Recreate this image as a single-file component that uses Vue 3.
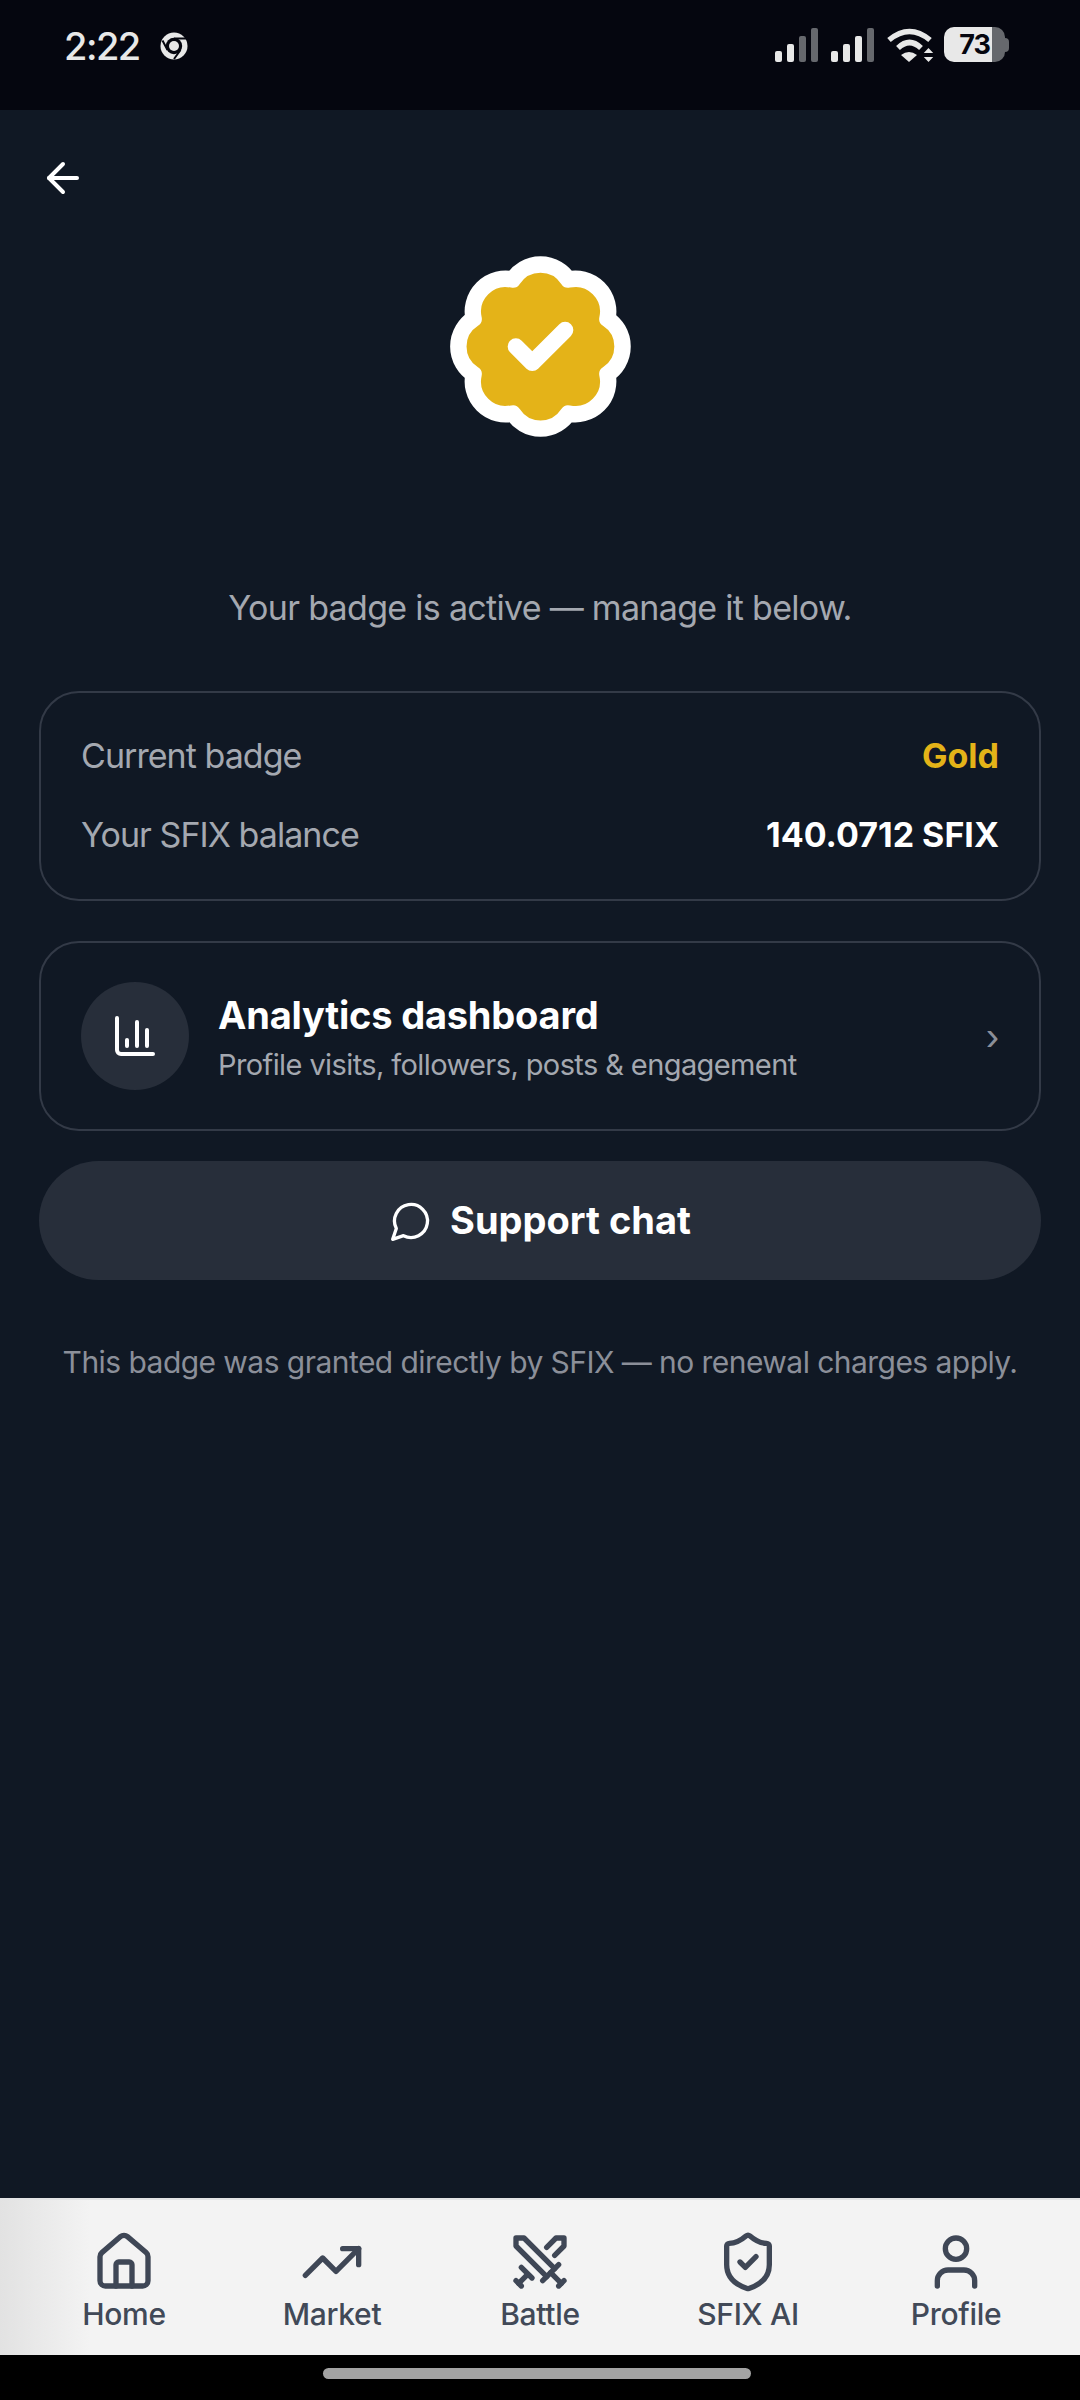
<template>
  <div class="page">
    <!-- status bar -->
    <div class="status">
      <div class="status-left">
        <span class="time">2:22</span>
        <svg class="chrome" width="28" height="28" viewBox="0 0 28 28">
          <circle cx="14" cy="14" r="13.500" fill="#e8e8e8" />
          <circle cx="14" cy="14" r="8.200" fill="#05060f" />
          <circle cx="14" cy="14" r="5" fill="#e8e8e8" />
          <path d="M14 6.500H26M7.500 18 2.500 8.500M20.500 18 14 27" stroke="#05060f" stroke-width="2" fill="none" />
        </svg>
      </div>
      <div class="status-right">
        <svg width="158" height="36" viewBox="0 0 158 36" class="signal">
          <g fill="#e8e8e8">
            <rect x="0" y="23" width="7" height="11" rx="2" />
            <rect x="12" y="16" width="7" height="18" rx="2" />
            <rect x="56" y="23" width="7" height="11" rx="2" />
            <rect x="68" y="16" width="7" height="18" rx="2" />
            <rect x="80" y="8" width="7" height="26" rx="2" />
          </g>
          <g fill="#66686d">
            <rect x="24" y="8" width="7" height="26" rx="2" />
            <rect x="36" y="0" width="7" height="34" rx="2" />
            <rect x="92" y="0" width="7" height="34" rx="2" />
          </g>
          <g fill="none" stroke="#e8e8e8" stroke-width="5.500">
            <path d="M114 12Q134.500-5 155 12" />
            <path d="M123 20Q134.500 9 146 20" />
          </g>
          <path d="M126 27Q134 21 142 27L134 34z" fill="#e8e8e8" />
          <path d="M153.500 20l4.700 5h-9.400zM153.500 34l4.700-5h-9.400z" fill="#e8e8e8" />
        </svg>
        <div class="battery">
          <div class="battery-fill"><span>73</span></div>
          <div class="battery-nub"></div>
        </div>
      </div>
    </div>

    <main class="main">
      <div class="back">
        <svg class="icon" width="48" height="48" viewBox="0 0 24 24">
          <path d="m12 19-7-7 7-7" />
          <path d="M19 12H5" />
        </svg>
      </div>

      <div class="hero">
        <svg width="197" height="197" viewBox="0 0 24 24" class="badge">
          <path d="M3.850 8.620a4 4 0 0 1 4.780-4.770 4 4 0 0 1 6.740 0 4 4 0 0 1 4.780 4.780 4 4 0 0 1 0 6.740 4 4 0 0 1-4.770 4.780 4 4 0 0 1-6.750 0 4 4 0 0 1-4.780-4.770 4 4 0 0 1 0-6.760Z" fill="#e4b318" stroke="#fff" stroke-width="2" stroke-linejoin="round" />
          <path d="m9 12 2 2 4-4" fill="none" stroke="#fff" stroke-width="2" stroke-linecap="round" stroke-linejoin="round" />
        </svg>
      </div>

      <p class="lead">Your badge is active — manage it below.</p>

      <section class="card info">
        <div class="row">
          <span class="label">Current badge</span>
          <span class="gold">Gold</span>
        </div>
        <div class="row">
          <span class="label">Your SFIX balance</span>
          <span class="balance">140.0712 SFIX</span>
        </div>
      </section>

      <section class="card analytics">
        <div class="circle">
          <svg class="icon" width="48" height="48" viewBox="0 0 24 24">
            <path d="M3 3v16a2 2 0 0 0 2 2h16" />
            <path d="M18 17V9" />
            <path d="M13 17V5" />
            <path d="M8 17v-3" />
          </svg>
        </div>
        <div class="analytics-text">
          <div class="title">Analytics dashboard</div>
          <div class="sub">Profile visits, followers, posts &amp; engagement</div>
        </div>
        <span class="chev">›</span>
      </section>

      <button class="support">
        <svg class="icon thin" width="44" height="44" viewBox="0 0 24 24">
          <path d="M7.900 20A9 9 0 1 0 4 16.100L2 22Z" />
        </svg>
        <span class="support-text">Support chat</span>
      </button>

      <p class="note">This badge was granted directly by SFIX — no renewal charges apply.</p>
    </main>

    <!-- bottom tabs -->
    <nav class="tabs">
      <div v-for="t in tabs" :key="t.label" class="tab">
        <svg class="tab-icon" width="64" height="64" viewBox="0 0 24 24">
          <path v-for="d in t.paths" :key="d" :d="d" />
          <circle v-if="t.circle" cx="12" cy="7" r="4" />
        </svg>
        <span class="tab-label">{{ t.label }}</span>
      </div>
    </nav>

    <div class="gesture"><div class="pill"></div></div>
  </div>
</template>

<script setup>
const tabs = [
  {
    label: 'Home',
    paths: [
      'M15 21v-8a1 1 0 0 0-1-1h-4a1 1 0 0 0-1 1v8',
      'M3 10a2 2 0 0 1 .709-1.528l7-5.999a2 2 0 0 1 2.582 0l7 5.999A2 2 0 0 1 21 10v9a2 2 0 0 1-2 2H5a2 2 0 0 1-2-2z'
    ]
  },
  {
    label: 'Market',
    paths: ['M16 7h6v6', 'm22 7-8.500 8.500-5-5L2 17']
  },
  {
    label: 'Battle',
    paths: [
      'M14.500 17.500 3 6V3h3l11.500 11.500',
      'M13 19l6-6',
      'M16 16l4 4',
      'M19 21l2-2',
      'M14.500 6.500 18 3h3v3l-3.500 3.500',
      'M5 14l4 4',
      'M7 17l-3 3',
      'M3 19l2 2'
    ]
  },
  {
    label: 'SFIX AI',
    paths: [
      'M20 13c0 5-3.500 7.500-7.660 8.950a1 1 0 0 1-.67-.01C7.500 20.500 4 18 4 13V6a1 1 0 0 1 1-1c2 0 4.500-1.200 6.240-2.720a1.170 1.170 0 0 1 1.520 0C14.510 3.810 17 5 19 5a1 1 0 0 1 1 1z',
      'm9 12 2 2 4-4'
    ]
  },
  {
    label: 'Profile',
    paths: ['M19 21v-2a4 4 0 0 0-4-4H9a4 4 0 0 0-4 4v2'],
    circle: true
  }
]
</script>

<style scoped>
.page {
  width: 1080px;
  height: 2400px;
  display: flex;
  flex-direction: column;
  background: #101824;
  font-family: Inter, "Liberation Sans", sans-serif;
  overflow: hidden;
}

.status {
  height: 110px;
  flex: none;
  background: #05060f;
  display: flex;
  justify-content: space-between;
  padding: 26px 71px 0 64px;
  box-sizing: border-box;
}
.status-left {
  display: flex;
  align-items: flex-start;
  gap: 20px;
}
.time {
  color: #e8e8e8;
  font-size: 38px;
  line-height: 40px;
  font-weight: 500;
  letter-spacing: -1.500px;
}
.chrome {
  margin-top: 6px;
}
.status-right {
  display: flex;
  align-items: flex-start;
  gap: 11px;
}
.signal {
  margin-top: 2px;
  overflow: visible;
}
.battery {
  display: flex;
  align-items: center;
  height: 35px;
  margin-top: 1px;
}
.battery-fill {
  width: 61px;
  height: 35px;
  border-radius: 10px;
  background: linear-gradient(to right, #e8e8e8 48px, #66686d 48px);
  display: flex;
  justify-content: center;
}
.battery-fill span {
  color: #05060f;
  font-size: 27px;
  line-height: 35px;
  font-weight: 700;
  letter-spacing: -1px;
}
.battery-nub {
  width: 4px;
  height: 14px;
  border-radius: 0 4px 4px 0;
  background: #66686d;
}

.main {
  flex: 1;
  padding: 0 39px;
  display: flex;
  flex-direction: column;
}
.back {
  padding-top: 44px;
  height: 48px;
}
.icon {
  fill: none;
  stroke: #fff;
  stroke-width: 2;
  stroke-linecap: round;
  stroke-linejoin: round;
  display: block;
}
.icon.thin {
  stroke-width: 1.800;
}
.hero {
  display: flex;
  justify-content: center;
  margin-top: 46px;
}
.badge {
  display: block;
}
.lead {
  margin: 141px 0 0;
  text-align: center;
  color: #a4a8b0;
  font-size: 34px;
  line-height: 44px;
  letter-spacing: -0.700px;
}

.card {
  box-sizing: border-box;
  border: 2px solid #333a47;
  border-radius: 40px;
}
.info {
  margin-top: 61px;
  height: 210px;
  padding: 43px 40px 0;
  display: flex;
  flex-direction: column;
  gap: 39px;
}
.row {
  display: flex;
  justify-content: space-between;
  font-size: 34px;
  line-height: 40px;
}
.label {
  color: #a4a8b0;
  letter-spacing: -0.950px;
}
.gold {
  color: #e4b318;
  font-weight: 700;
}
.balance {
  color: #fff;
  font-weight: 700;
}

.analytics {
  margin-top: 40px;
  height: 190px;
  padding: 0 40px;
  display: flex;
  align-items: center;
}
.circle {
  width: 108px;
  height: 108px;
  border-radius: 50%;
  background: #272e3a;
  display: flex;
  align-items: center;
  justify-content: center;
  flex: none;
}
.analytics-text {
  margin-left: 29px;
  padding-top: 3px;
  flex: 1;
}
.title {
  color: #fff;
  font-size: 38px;
  line-height: 46px;
  font-weight: 700;
  letter-spacing: -0.200px;
}
.sub {
  margin-top: 9px;
  color: #a4a8b0;
  font-size: 29px;
  line-height: 36px;
  letter-spacing: -0.600px;
}
.chev {
  color: #8b8f99;
  font-family: "Liberation Sans", sans-serif;
  font-size: 40px;
  line-height: 40px;
}

.support {
  margin-top: 30px;
  height: 119px;
  border: 0;
  border-radius: 60px;
  background: #272e3a;
  color: #fff;
  font-family: inherit;
  font-size: 38px;
  font-weight: 700;
  display: flex;
  align-items: center;
  justify-content: center;
  gap: 17px;
}
.support-text {
  margin-bottom: 2px;
}

.note {
  margin: 61px 0 0;
  text-align: center;
  color: #8b8f99;
  font-size: 30px;
  line-height: 42px;
  letter-spacing: -0.550px;
}

.tabs {
  flex: none;
  height: 157px;
  box-sizing: border-box;
  border-top: 2px solid #e2e3e5;
  padding: 30px 20px 0;
  display: flex;
  background: linear-gradient(to right, #e2e2e2, #f3f3f3 90px);
}
.tab {
  flex: 1;
  display: flex;
  flex-direction: column;
  align-items: center;
}
.tab-icon {
  fill: none;
  stroke: #3f4756;
  stroke-width: 2;
  stroke-linecap: round;
  stroke-linejoin: round;
  display: block;
}
.tab-label {
  margin-top: 2px;
  color: #414957;
  font-size: 30px;
  line-height: 36px;
  font-weight: 500;
  letter-spacing: -0.300px;
}

.gesture {
  flex: none;
  height: 45px;
  background: #000;
  display: flex;
  justify-content: center;
  padding-top: 13px;
  box-sizing: border-box;
}
.pill {
  width: 428px;
  height: 11px;
  margin-left: -6px;
  border-radius: 6px;
  background: #a3a3a3;
}
</style>
